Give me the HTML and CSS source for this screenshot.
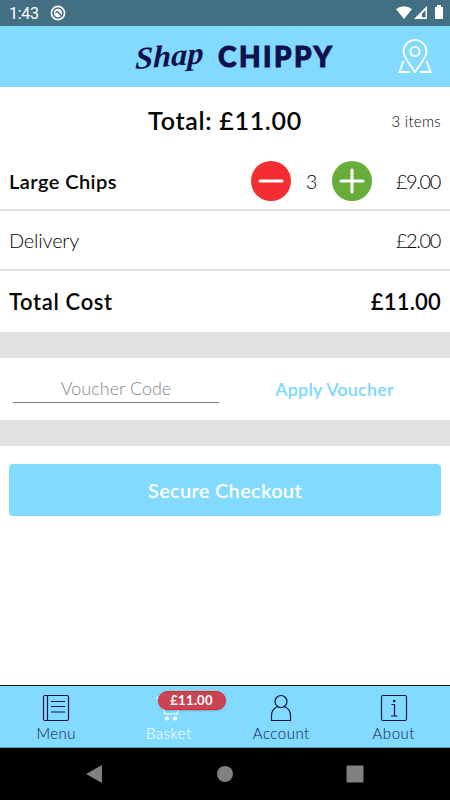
FILE: index.html
```html
<!DOCTYPE html>
<html lang="en">
<head>
<meta charset="utf-8">
<title>Shap Chippy</title>
<link rel="stylesheet" href="styles.css">
</head>
<body>
<div class="status">
  <span class="clock">1:43</span>
  <svg class="dnd" width="16" height="16" viewBox="0 0 16 16"><circle cx="8" cy="8" r="6.6" fill="none" stroke="#fff" stroke-width="1.6"/><circle cx="8" cy="8" r="4.2" fill="#fff"/><path d="M5.500 7.500l2-1 4 4.500" fill="none" stroke="#436f82" stroke-width="1.4"/></svg>
  <svg class="signals" width="50" height="16" viewBox="0 0 50 16"><path d="M0 4Q8 -1.500 16 4L8 14z" fill="#fff"/><path d="M31 1v13H18z" fill="#fff"/><path d="M29.500 5v7.300h-3.500V8.800z" fill="#436f82"/><path d="M39 2h2V0h4v2h2v12h-8z" fill="#fff"/></svg>
</div>
<header class="header">
  <svg class="logo" width="202" height="50" viewBox="0 0 202 50">
    <text class="script" transform="translate(3 37) skewX(-6) rotate(-5)" textLength="68" lengthAdjust="spacingAndGlyphs">Shap</text>
    <text class="caps" x="86" y="35" textLength="114" lengthAdjust="spacing">CHIPPY</text>
  </svg>
  <svg class="pin" width="34" height="36" viewBox="0 0 34 36" fill="none" stroke="#fff" stroke-width="1.800"><path d="M17 33C12 25.500 5.500 18.500 5.500 12.500a11.500 11.500 0 0 1 23 0C28.500 18.500 22 25.500 17 33z"/><circle cx="17" cy="12.500" r="4.600"/><path d="M5.500 22L1.500 33H12M28.500 22l4 11H22"/></svg>
</header>
<main>
  <div class="summary"><h1>Total: £11.00</h1><span>3 items</span></div>
  <div class="row item">
    <span class="name">Large Chips</span>
    <button class="round minus"><svg width="40" height="40"><path d="M9 20h22"/></svg></button>
    <span class="qty">3</span>
    <button class="round plus"><svg width="40" height="40"><path d="M9 20h22M20 9v22"/></svg></button>
    <span class="price">£9.00</span>
  </div>
  <div class="row delivery"><span class="deliv">Delivery</span><span class="price">£2.00</span></div>
  <div class="row cost"><span class="costlabel">Total Cost</span><span class="costval">£11.00</span></div>
  <div class="band"></div>
  <div class="voucher"><div class="field">Voucher Code</div><div class="apply"><span>Apply Voucher</span></div></div>
  <div class="band"></div>
  <div class="checkout"><span>Secure Checkout</span></div>
</main>
<nav class="tabs">
  <div class="tab"><svg width="28" height="28" viewBox="0 0 28 28"><rect x="1.500" y="1.500" width="25" height="25" rx="1.500"/><path d="M5.500 1.500v25M9 7.500h14M9 12.500h14M9 18h14"/></svg><span class="t-menu">Menu</span></div>
  <div class="tab active"><svg width="28" height="28" viewBox="0 0 28 28"><path d="M1 4h4l5 16h12l3-12H7"/><circle cx="12" cy="24.500" r="1.500" fill="#fff"/><circle cx="20" cy="24.500" r="1.500" fill="#fff"/></svg><span class="t-basket">Basket</span><b class="badge">£11.00</b></div>
  <div class="tab"><svg width="28" height="28" viewBox="0 0 28 28"><circle cx="14" cy="7.500" r="6"/><path d="M10.500 12.800C6 14.500 4.500 17.500 4.500 22v4.500h19V22c0-4.500-1.500-7.500-6-9.200"/></svg><span class="t-account">Account</span></div>
  <div class="tab"><svg width="28" height="28" viewBox="0 0 28 28"><rect x="1.500" y="1.500" width="25" height="25" rx="1.500"/><path d="M11.500 10.500h3V22M11 22h6.500"/><circle cx="14.200" cy="7" r=".7" fill="#111345"/></svg><span class="t-about">About</span></div>
</nav>
<div class="sysnav">
  <svg width="18" height="18"><path d="M1 9L17 0v18z"/></svg>
  <svg width="18" height="18"><circle cx="9" cy="9" r="8"/></svg>
  <svg width="18" height="18"><rect x="0.500" y="0.500" width="17" height="17" rx="1"/></svg>
</div>
</body>
</html>
```
FILE: styles.css
```css
* { box-sizing: border-box; }
body { margin: 0; width: 450px; height: 800px; overflow: hidden; background: #fff; color: #050505; font-family: Lato, sans-serif; font-weight: 300; display: flex; flex-direction: column; }
span, h1, b, .field { white-space: nowrap; }
.status { height: 26px; background: #436f82; display: flex; align-items: center; padding: 0 8px 0 9px; }
.clock { font: 400 16px Roboto, sans-serif; color: #fff; width: 41px; padding-top: 1px; letter-spacing: -.3px; }
.signals { margin-left: auto; margin-right: -4px; }
.header { height: 61px; background: #82dbff; display: flex; align-items: center; padding: 0 17px 0 132px; }
.logo { overflow: visible; }
.logo text { fill: #10104f; }
.logo .script { font: italic 700 31px "Liberation Serif", serif; }
.logo .caps { font: 900 28px Lato, sans-serif; stroke: #10104f; stroke-width: 1px; }
.pin { margin-left: auto; margin-right: 1px; margin-top: 1px; }
main { flex: 1; }
.summary { height: 65px; display: grid; grid-template-columns: 1fr auto 1fr; align-items: center; padding: 0 9px; }
.summary h1 { grid-column: 2; margin: 0; font-size: 25px; font-weight: 600; letter-spacing: .7px; }
.summary span { justify-self: end; font-size: 15px; letter-spacing: .3px; padding-top: 2px; }
.row { display: flex; align-items: center; padding: 0 9px; border-bottom: 2px solid #e1e1e3; }
.item { height: 59px; }
.name { font-size: 20px; font-weight: 600; letter-spacing: .45px; margin-right: auto; }
.round { width: 40px; height: 40px; border: 0; border-radius: 50%; padding: 0; }
.round svg { display: block; fill: none; stroke: #fff; stroke-width: 3; stroke-linecap: round; }
.minus { background: #f32d31; }
.plus { background: #68ac39; }
.qty { width: 41px; text-align: center; font-size: 20px; }
.price { width: 69px; text-align: right; font-size: 20px; letter-spacing: -1.4px; padding-right: 1px; }
.delivery { height: 60px; justify-content: space-between; }
.deliv { font-size: 20px; letter-spacing: -.2px; }
.cost { height: 61px; border: 0; justify-content: space-between; }
.costlabel, .costval { font-size: 22px; font-weight: 600; letter-spacing: .65px; }
.costval { letter-spacing: .2px; }
.band { height: 26px; background: #e1e1e3; }
.voucher { height: 62px; display: flex; padding-left: 13px; }
.field { width: 206px; height: 45px; border-bottom: 1px solid #818181; text-align: center; color: #858585; font-size: 18px; padding-top: 19px; }
.apply { flex: 1; text-align: center; padding: 20px 0 0; color: #7bd8ff; font-size: 18px; font-weight: 600; letter-spacing: .2px; }
.checkout { height: 52px; margin: 18px 9px 0; background: #82dbff; border-radius: 4px; display: flex; align-items: center; justify-content: center; color: #fff; font-size: 20px; font-weight: 600; letter-spacing: .3px; }
.tabs { height: 63px; background: #82dbff; border-top: 1px solid #111; border-bottom: 1px solid #5798b4; display: grid; grid-template-columns: repeat(4, 1fr); color: #111345; }
.tab { position: relative; display: flex; flex-direction: column; align-items: center; padding-top: 8px; }
.tab svg { fill: none; stroke: #111345; stroke-width: 1.200; }
.tab.active { color: #fff; }
.tab.active svg { stroke: #fff; }
.tab span { font-size: 15px; line-height: 18px; margin-top: 2px; letter-spacing: .5px; }
.badge { position: absolute; left: 45px; top: 5px; width: 68px; height: 19px; border: 1px solid #e22; border-radius: 10px; background: #cb4453; color: #fff; text-align: center; font-size: 13px; font-weight: 700; letter-spacing: .3px; line-height: 17px; box-shadow: 0 1px 2px #0003; }
.sysnav { height: 52px; background: #000; display: flex; justify-content: space-between; align-items: center; padding: 0 86px 0 85px; }
.sysnav svg { fill: #808080; }
```
